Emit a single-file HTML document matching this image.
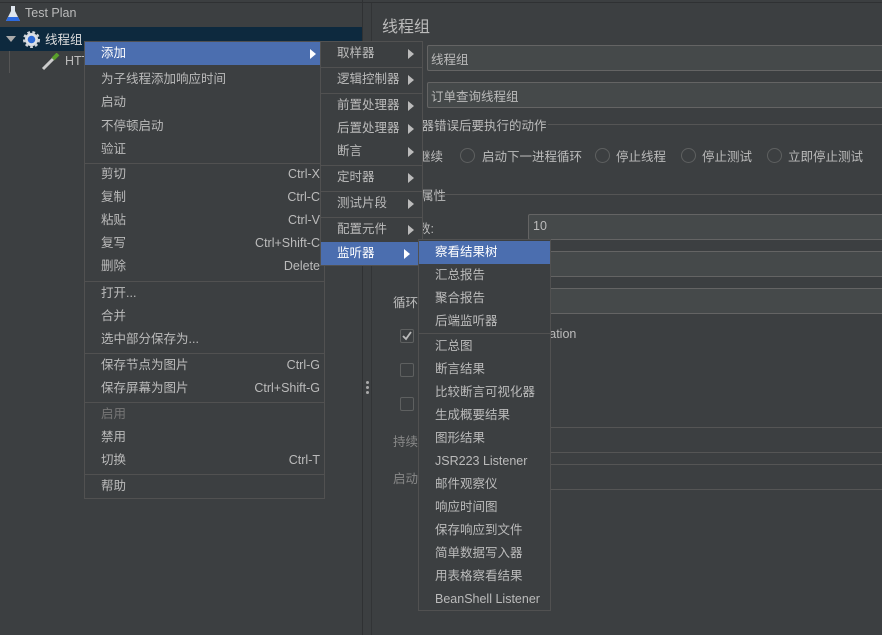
<!DOCTYPE html>
<html><head><meta charset="utf-8">
<style>
*{margin:0;padding:0;box-sizing:border-box}
body{width:882px;height:635px;background:#3c3f41;position:relative;overflow:hidden;font-family:"Liberation Sans","Noto Sans CJK SC",sans-serif;font-size:12.5px;color:#bbbbbb}
.a{position:absolute;white-space:nowrap}
.fld{position:absolute;background:#45494a;border:1px solid #646464;border-radius:2px}
.menu{position:absolute;background:#3c3f41;border:1px solid #515151}
.it{position:absolute;left:0;right:0;height:23px;line-height:23px;white-space:nowrap}
.hl{background:#4b6eaf;color:#fff}
.sc{position:absolute;right:4px;top:0}
.sep{position:absolute;left:0;right:0;height:1px;background:#515151}
.arr{position:absolute;right:8px;top:7px;width:0;height:0;border-left:6px solid #bbb;border-top:5px solid transparent;border-bottom:5px solid transparent}
.hl .arr{border-left-color:#fff}
.radio{position:absolute;width:15px;height:15px;border-radius:50%;border:1px solid #5e6060;background:#3c3f41}
.cb{position:absolute;width:14px;height:14px;border:1px solid #5e6060;border-radius:2px;background:#3c3f41}
.line{position:absolute;height:1px;background:#555}
</style></head><body>
<div class="a" style="left:0;top:2px;width:882px;height:1px;background:#2f3133"></div>
<!-- tree -->
<div class="a" style="left:0;top:27px;width:362px;height:24px;background:#0d293e"></div>
<svg class="a" style="left:5px;top:5px" width="16" height="18" viewBox="0 0 16 18"><path d="M6 1h4v5l5 10H1L6 6z" fill="#dfe6ee"/><path d="M3 12h10l2 4H1z" fill="#2d6be0"/></svg>
<div class="a" style="left:25px;top:6px;font-size:12.5px">Test Plan</div>
<div class="a" style="left:6px;top:36px;width:0;height:0;border-top:6px solid #aaa;border-left:5px solid transparent;border-right:5px solid transparent"></div>
<svg class="a" style="left:22px;top:30px" width="19" height="19" viewBox="0 0 20 20"><circle cx="10" cy="10" r="7" fill="#cfd3d8" stroke="#cfd3d8" stroke-width="4" stroke-dasharray="2.6 2.2"/><circle cx="10" cy="10" r="6" fill="#dde1e6"/><circle cx="10" cy="10" r="4" fill="#2f6bd6"/></svg>
<div class="a" style="left:45px;top:29px;color:#ddd">线程组</div>
<div class="a" style="left:9px;top:51px;width:1px;height:22px;background:#555"></div>
<svg class="a" style="left:41px;top:53px" width="20" height="18" viewBox="0 0 20 18"><path d="M2 16L12 6" stroke="#ccc" stroke-width="3"/><path d="M12 6l5-5" stroke="#5aa02c" stroke-width="4"/></svg>
<div class="a" style="left:65px;top:54px">HTTP</div>
<!-- splitter -->
<div class="a" style="left:362px;top:0;width:1px;height:635px;background:#2f3133"></div>
<div class="a" style="left:371px;top:3px;width:1px;height:632px;background:#323436"></div>
<div class="a" style="left:366px;top:381px;width:3px;height:3px;background:#aaa;border-radius:50%"></div>
<div class="a" style="left:366px;top:386px;width:3px;height:3px;background:#aaa;border-radius:50%"></div>
<div class="a" style="left:366px;top:391px;width:3px;height:3px;background:#aaa;border-radius:50%"></div>
<!-- right panel -->
<div class="a" style="left:382px;top:13px;font-size:16px">线程组</div>
<div class="fld" style="left:427px;top:45px;width:460px;height:26px"><span class="a" style="left:3px;top:3px">线程组</span></div>
<div class="fld" style="left:427px;top:82px;width:460px;height:26px"><span class="a" style="left:3px;top:3px">订单查询线程组</span></div>
<div class="a" style="left:384px;top:115px">在取样器错误后要执行的动作</div>
<div class="line" style="left:548px;top:124px;width:334px"></div>
<div class="a" style="left:418px;top:146px">继续</div>
<div class="radio" style="left:460px;top:148px"></div><div class="a" style="left:482px;top:146px">启动下一进程循环</div>
<div class="radio" style="left:595px;top:148px"></div><div class="a" style="left:616px;top:146px">停止线程</div>
<div class="radio" style="left:681px;top:148px"></div><div class="a" style="left:702px;top:146px">停止测试</div>
<div class="radio" style="left:767px;top:148px"></div><div class="a" style="left:788px;top:146px">立即停止测试</div>
<div class="a" style="left:396px;top:185px">线程属性</div>
<div class="line" style="left:438px;top:194px;width:444px"></div>
<div class="a" style="left:393px;top:218px">线程数:</div>
<div class="fld" style="left:528px;top:214px;width:360px;height:26px"><span class="a" style="left:4px;top:4px">10</span></div>
<div class="a" style="left:393px;top:254px">Ramp-Up</div>
<div class="fld" style="left:528px;top:251px;width:360px;height:26px"></div>
<div class="a" style="left:393px;top:292px">循环次数</div>
<div class="fld" style="left:528px;top:288px;width:360px;height:26px"></div>
<div class="cb" style="left:400px;top:329px"></div>
<svg class="a" style="left:401px;top:330px" width="12" height="12"><path d="M2 6l3 3 5-7" stroke="#bbb" stroke-width="1.8" fill="none"/></svg>
<div class="a" style="left:420px;top:327px">Same user on each iteration</div>
<div class="cb" style="left:400px;top:363px"></div>
<div class="cb" style="left:400px;top:397px"></div>
<div class="a" style="left:393px;top:431px;color:#888">持续时间</div>
<div class="fld" style="left:528px;top:427px;width:360px;height:26px;background:#3c3f41;border-color:#555"></div>
<div class="a" style="left:393px;top:468px;color:#888">启动延迟</div>
<div class="fld" style="left:528px;top:464px;width:360px;height:26px;background:#3c3f41;border-color:#555"></div>

<!-- main context menu -->
<div class="menu" style="left:84px;top:41px;width:241px;height:458px">
<div class="it hl" style="top:0;padding-left:16px">添加<span class="arr"></span></div>
<div class="it" style="top:26px;padding-left:16px">为子线程添加响应时间</div>
<div class="it" style="top:49px;padding-left:16px">启动</div>
<div class="it" style="top:73px;padding-left:16px">不停顿启动</div>
<div class="it" style="top:96px;padding-left:16px">验证</div>
<div class="sep" style="top:121px"></div>
<div class="it" style="top:121px;padding-left:16px">剪切<span class="sc">Ctrl-X</span></div>
<div class="it" style="top:144px;padding-left:16px">复制<span class="sc">Ctrl-C</span></div>
<div class="it" style="top:167px;padding-left:16px">粘贴<span class="sc">Ctrl-V</span></div>
<div class="it" style="top:190px;padding-left:16px">复写<span class="sc">Ctrl+Shift-C</span></div>
<div class="it" style="top:213px;padding-left:16px">删除<span class="sc">Delete</span></div>
<div class="sep" style="top:239px"></div>
<div class="it" style="top:240px;padding-left:16px">打开...</div>
<div class="it" style="top:263px;padding-left:16px">合并</div>
<div class="it" style="top:286px;padding-left:16px">选中部分保存为...</div>
<div class="sep" style="top:311px"></div>
<div class="it" style="top:312px;padding-left:16px">保存节点为图片<span class="sc">Ctrl-G</span></div>
<div class="it" style="top:335px;padding-left:16px">保存屏幕为图片<span class="sc">Ctrl+Shift-G</span></div>
<div class="sep" style="top:360px"></div>
<div class="it" style="top:361px;padding-left:16px;color:#777">启用</div>
<div class="it" style="top:384px;padding-left:16px">禁用</div>
<div class="it" style="top:407px;padding-left:16px">切换<span class="sc">Ctrl-T</span></div>
<div class="sep" style="top:432px"></div>
<div class="it" style="top:433px;padding-left:16px">帮助</div>
</div>

<!-- submenu 1 -->
<div class="menu" style="left:320px;top:41px;width:103px;height:225px">
<div class="it" style="top:0;padding-left:16px">取样器<span class="arr"></span></div>
<div class="sep" style="top:25px"></div>
<div class="it" style="top:26px;padding-left:16px">逻辑控制器<span class="arr"></span></div>
<div class="sep" style="top:51px"></div>
<div class="it" style="top:52px;padding-left:16px">前置处理器<span class="arr"></span></div>
<div class="it" style="top:75px;padding-left:16px">后置处理器<span class="arr"></span></div>
<div class="it" style="top:98px;padding-left:16px">断言<span class="arr"></span></div>
<div class="sep" style="top:123px"></div>
<div class="it" style="top:124px;padding-left:16px">定时器<span class="arr"></span></div>
<div class="sep" style="top:149px"></div>
<div class="it" style="top:150px;padding-left:16px">测试片段<span class="arr"></span></div>
<div class="sep" style="top:175px"></div>
<div class="it" style="top:176px;padding-left:16px">配置元件<span class="arr"></span></div>
<div class="it hl" style="top:200px;right:4px;padding-left:16px">监听器<span class="arr"></span></div>
</div>

<!-- submenu 2 -->
<div class="menu" style="left:418px;top:239px;width:133px;height:372px">
<div class="it hl" style="top:1px;padding-left:16px">察看结果树</div>
<div class="it" style="top:24px;padding-left:16px">汇总报告</div>
<div class="it" style="top:47px;padding-left:16px">聚合报告</div>
<div class="it" style="top:70px;padding-left:16px">后端监听器</div>
<div class="sep" style="top:93px"></div>
<div class="it" style="top:95px;padding-left:16px">汇总图</div>
<div class="it" style="top:118px;padding-left:16px">断言结果</div>
<div class="it" style="top:141px;padding-left:16px">比较断言可视化器</div>
<div class="it" style="top:164px;padding-left:16px">生成概要结果</div>
<div class="it" style="top:187px;padding-left:16px">图形结果</div>
<div class="it" style="top:210px;padding-left:16px">JSR223 Listener</div>
<div class="it" style="top:233px;padding-left:16px">邮件观察仪</div>
<div class="it" style="top:256px;padding-left:16px">响应时间图</div>
<div class="it" style="top:279px;padding-left:16px">保存响应到文件</div>
<div class="it" style="top:302px;padding-left:16px">简单数据写入器</div>
<div class="it" style="top:325px;padding-left:16px">用表格察看结果</div>
<div class="it" style="top:348px;padding-left:16px">BeanShell Listener</div>
</div>
</body></html>
